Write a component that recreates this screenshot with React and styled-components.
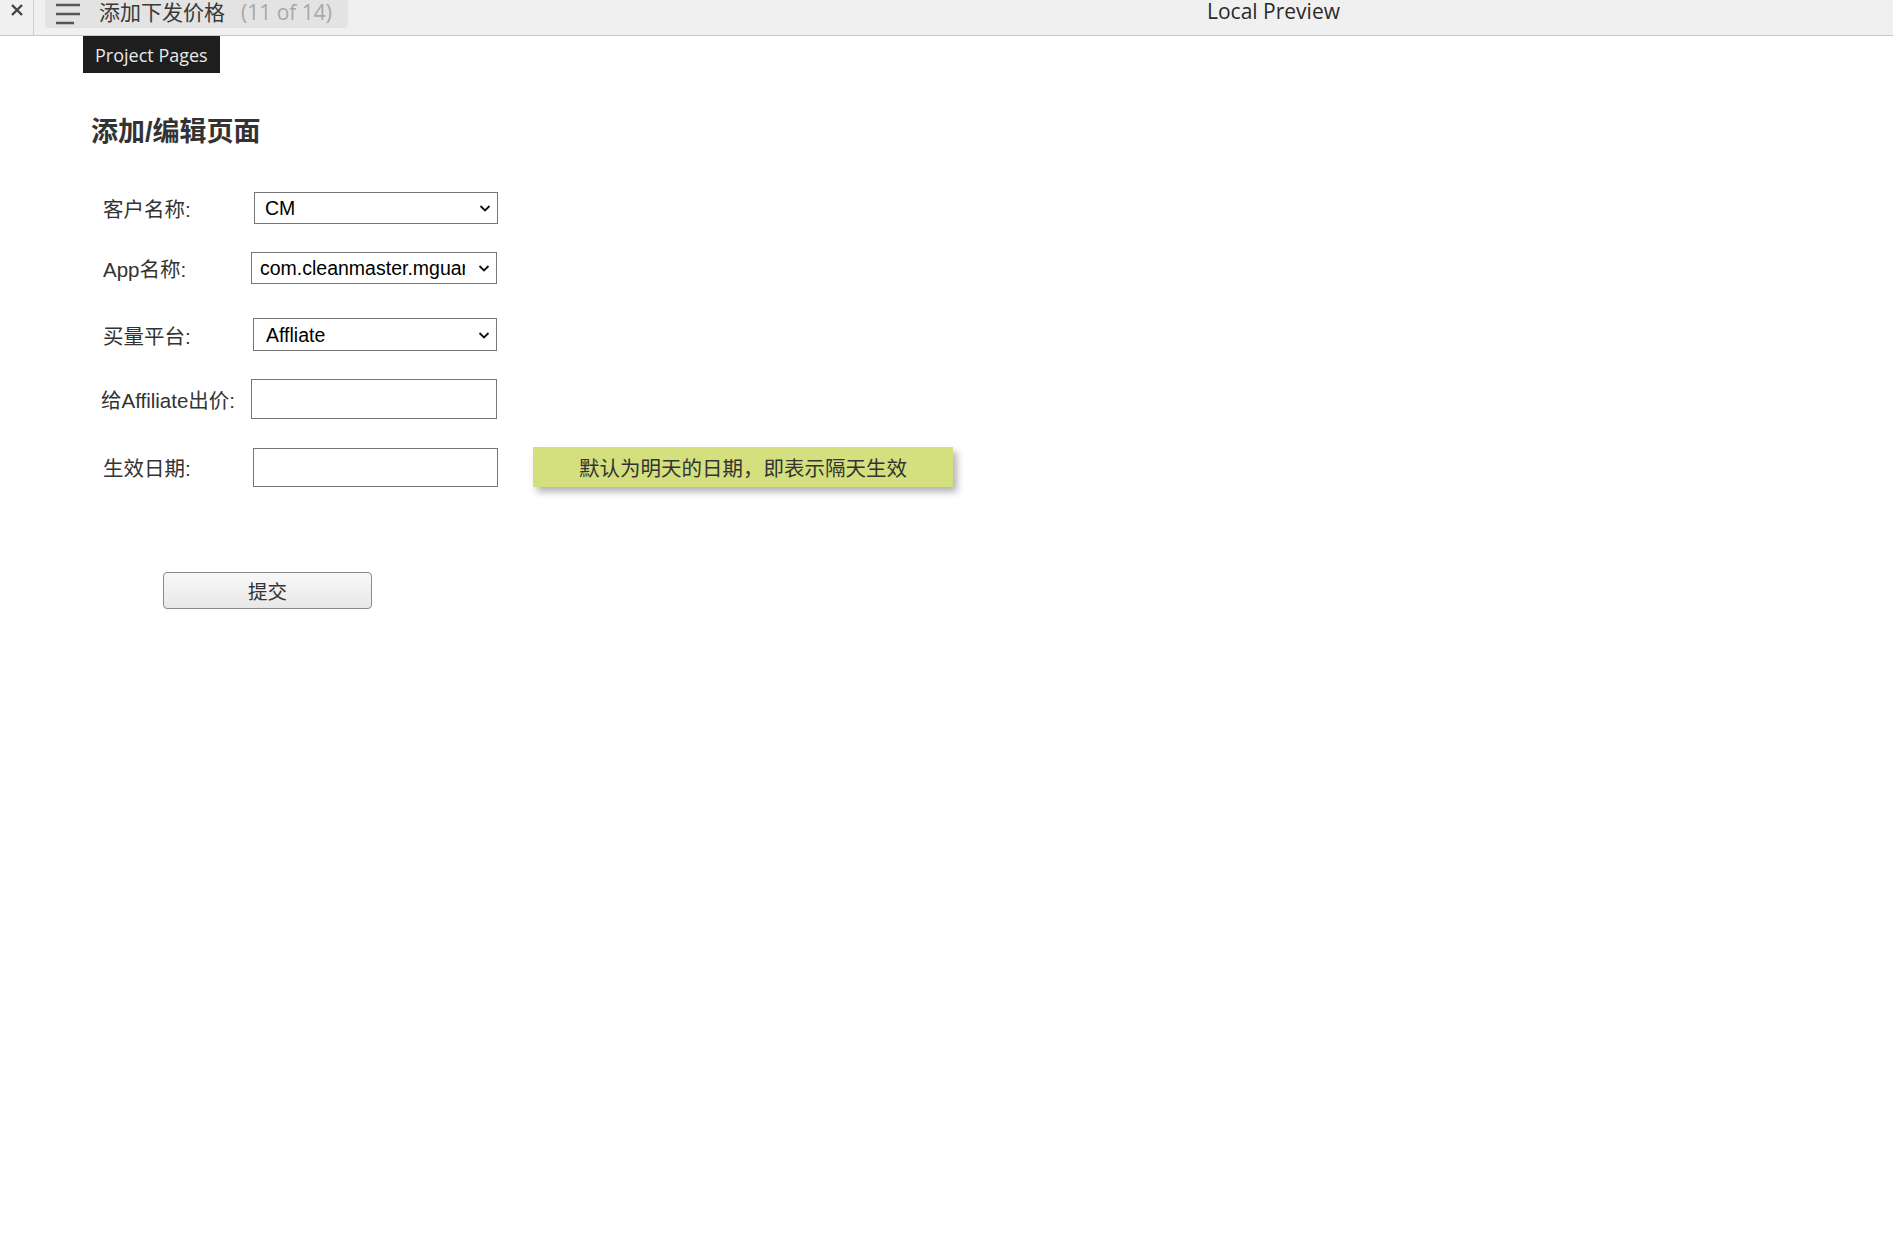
import React from "react";
import styled, { createGlobalStyle } from "styled-components";

const GlobalStyle = createGlobalStyle`
  html, body {
    margin: 0;
    padding: 0;
    background: #ffffff;
  }
  body {
    font-family: "Liberation Sans", "Noto Sans CJK SC", sans-serif;
    color: #333;
  }
`;

const Page = styled.div`
  position: relative;
  min-height: 1245px;
`;

const TitleBar = styled.div`
  display: flex;
  align-items: flex-start;
  height: 36px;
  background: #f0f0f0;
  border-bottom: 1px solid #c9c9c9;
  box-sizing: border-box;
  font-family: "Open Sans", "Noto Sans CJK SC", sans-serif;
`;

const CloseBox = styled.div`
  width: 34px;
  height: 36px;
  border-right: 1px solid #cfcfcf;
  display: flex;
  justify-content: center;
  padding-top: 3px;
  box-sizing: border-box;
`;

const Tab = styled.div`
  display: flex;
  align-items: center;
  gap: 19px;
  margin-left: 11px;
  width: 303px;
  height: 28px;
  padding-left: 11px;
  box-sizing: border-box;
  background: #e3e3e3;
  border-radius: 0 0 4px 4px;
`;

const TabName = styled.span`
  font-size: 21px;
  line-height: 24px;
  color: #3a3a3a;
  margin-top: -5px;
  display: flex;
  gap: 16px;
  white-space: nowrap;
`;

const TabCount = styled.span`
  color: #a8a8a8;
`;

const WindowTitle = styled.div`
  margin-left: 859px;
  margin-top: 0;
  font-size: 21px;
  line-height: 22px;
  color: #2a2a2a;
`;

const Tooltip = styled.div`
  position: absolute;
  left: 83px;
  top: 36px;
  height: 37px;
  padding: 0 12px;
  display: flex;
  align-items: center;
  background: #1e1e1e;
  color: #e8e8e8;
  font-family: "Open Sans", sans-serif;
  font-size: 18px;
`;

const Main = styled.div`
  padding: 80px 0 0 91px;
`;

const Heading = styled.h2`
  margin: 0;
  font-size: 27px;
  line-height: 32px;
  font-weight: bold;
  color: #333;
`;

const Form = styled.form`
  display: flex;
  flex-direction: column;
  gap: 28px;
  margin-top: 44px;
  padding-left: 12px;
`;

const Row = styled.div`
  display: flex;
  align-items: center;
  margin-top: ${(p) => p.$extra || 0}px;
`;

const Label = styled.label`
  width: 148px;
  margin-left: ${(p) => p.$shift || 0}px;
  flex-shrink: 0;
  font-size: 20.5px;
  color: #333;
  white-space: nowrap;
`;

const SelectWrap = styled.div`
  position: relative;
  margin-left: ${(p) => p.$shift || 0}px;
`;

const Select = styled.select`
  appearance: none;
  width: ${(p) => p.$w || 244}px;
  height: ${(p) => p.$h || 32}px;
  padding: 0 31px 0 ${(p) => p.$pad || 10}px;
  border: 1px solid #767676;
  border-radius: 0;
  background: #fff;
  font-family: "Liberation Sans", Arial, sans-serif;
  font-size: 19.5px;
  color: #000;
  box-sizing: border-box;
  outline: none;
`;

const Chevron = styled.svg`
  position: absolute;
  right: 6px;
  top: 50%;
  transform: translateY(-50%);
  pointer-events: none;
`;

const Input = styled.input`
  width: ${(p) => p.$w || 246}px;
  height: ${(p) => p.$h || 40}px;
  margin-left: ${(p) => p.$shift || 0}px;
  border: 1px solid #767676;
  box-sizing: border-box;
  font-size: 19px;
  outline: none;
`;

const Note = styled.div`
  margin-left: 35px;
  width: 420px;
  height: 40px;
  display: flex;
  align-items: center;
  justify-content: center;
  background: #d3e07d;
  box-shadow: 4px 5px 7px rgba(0, 0, 0, 0.3);
  font-family: "Noto Sans CJK SC", sans-serif;
  font-size: 20.5px;
  color: #333;
`;

const SubmitRow = styled.div`
  margin-top: 85px;
  padding-left: 72px;
`;

const Button = styled.button`
  width: 209px;
  height: 37px;
  border: 1px solid #8a8a8a;
  border-radius: 4px;
  background: linear-gradient(#f8f8f8, #e8e8e8);
  font-family: "Noto Sans CJK SC", sans-serif;
  font-size: 19.5px;
  color: #333;
  padding: 0;
`;

function DropDown({ value, options, shift, w, h, pad }) {
  return (
    <SelectWrap $shift={shift}>
      <Select defaultValue={value} $w={w} $h={h} $pad={pad}>
        {options.map((o) => (
          <option key={o}>{o}</option>
        ))}
      </Select>
      <Chevron width="14" height="10" viewBox="0 0 14 10">
        <path d="M2.5 3 L7 7.5 L11.5 3" fill="none" stroke="#111" strokeWidth="1.8" />
      </Chevron>
    </SelectWrap>
  );
}

export default function App() {
  return (
    <Page>
      <GlobalStyle />
      <TitleBar>
        <CloseBox>
          <svg width="14" height="14" viewBox="0 0 14 14">
            <path d="M2 2 L12 12 M12 2 L2 12" stroke="#444" strokeWidth="2.4" />
          </svg>
        </CloseBox>
        <Tab>
          <svg width="24" height="22" viewBox="0 0 24 22">
            <path d="M0 2 H24 M0 11 H24 M0 20 H18" stroke="#555" strokeWidth="2.6" />
          </svg>
          <TabName>
            添加下发价格
            <TabCount>(11 of 14)</TabCount>
          </TabName>
        </Tab>
        <WindowTitle>Local Preview</WindowTitle>
      </TitleBar>
      <Tooltip>Project Pages</Tooltip>

      <Main>
        <Heading>添加/编辑页面</Heading>
        <Form onSubmit={(e) => e.preventDefault()}>
          <Row>
            <Label>客户名称:</Label>
            <DropDown value="CM" options={["CM"]} shift={3} />
          </Row>
          <Row>
            <Label>App名称:</Label>
            <DropDown
              value="com.cleanmaster.mguard"
              options={["com.cleanmaster.mguard"]}
              w={246}
              pad={8}
            />
          </Row>
          <Row $extra={6}>
            <Label>买量平台:</Label>
            <DropDown value="Affliate" options={["Affliate"]} shift={2} h={33} pad={12} />
          </Row>
          <Row>
            <Label $shift={-2}>给Affiliate出价:</Label>
            <Input $shift={2} />
          </Row>
          <Row>
            <Label>生效日期:</Label>
            <Input $shift={2} $w={245} $h={39} />
            <Note>默认为明天的日期，即表示隔天生效</Note>
          </Row>
        </Form>
        <SubmitRow>
          <Button type="button">提交</Button>
        </SubmitRow>
      </Main>
    </Page>
  );
}
